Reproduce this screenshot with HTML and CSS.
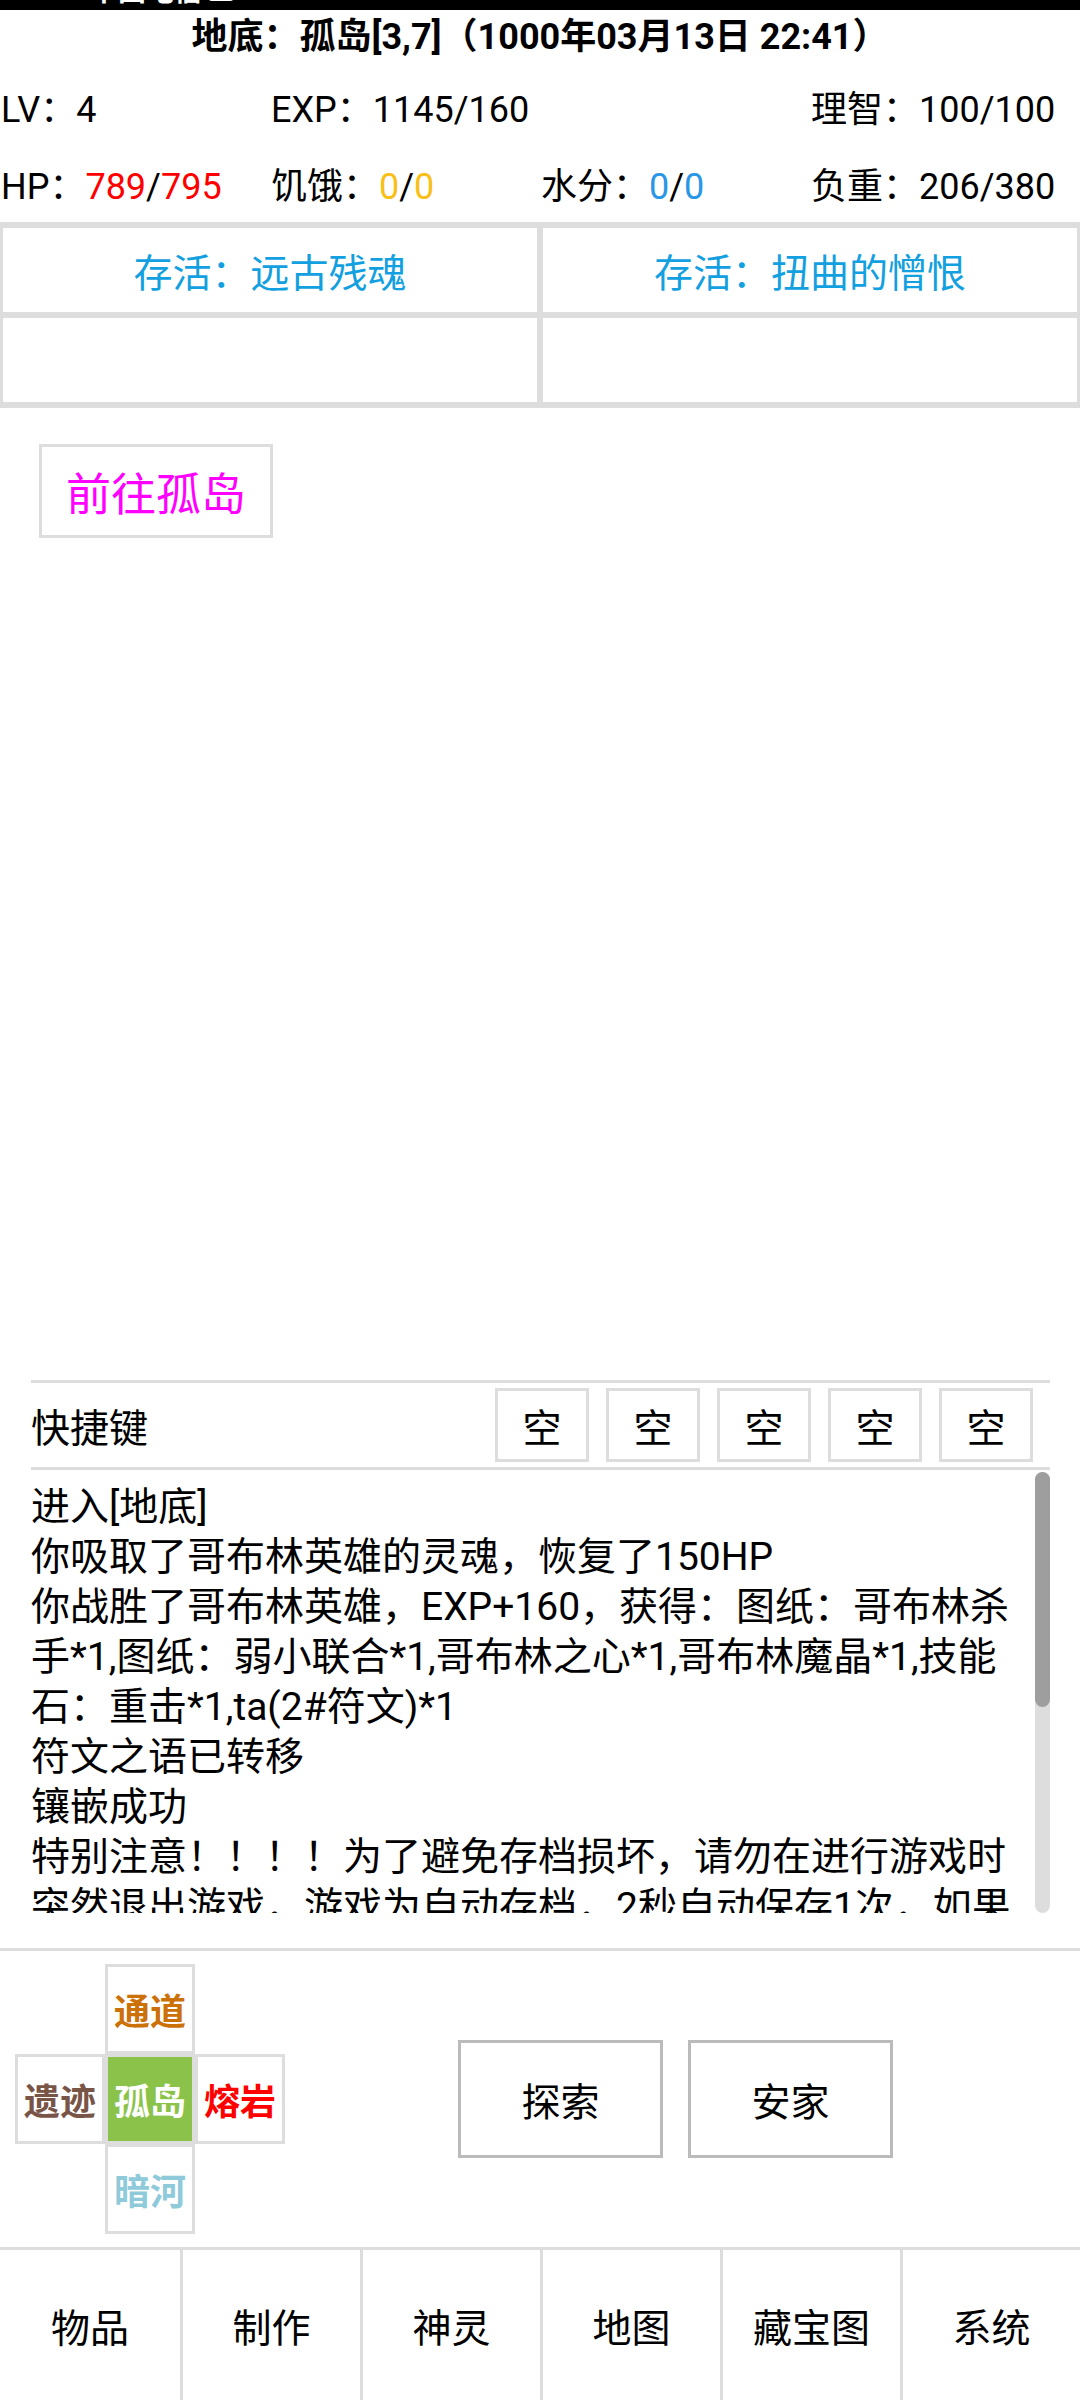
FILE: index.html
```html
<!DOCTYPE html>
<html lang="zh-CN">
<head>
<meta charset="utf-8">
<title>地底</title>
<link rel="stylesheet" href="styles.css">
</head>
<body>
<div class="page">
  <div class="statusbar">
    <div class="statusbar-inner"><span>中国电信</span><span class="sb-icon"></span></div>
  </div>
  <div class="title">地底：孤岛[3,7]（1000年03月13日 22:41）</div>
  <div class="stats">
    <div>LV：4</div>
    <div>EXP：1145/160</div>
    <div></div>
    <div>理智：100/100</div>
    <div>HP：<span class="red">789</span>/<span class="red">795</span></div>
    <div>饥饿：<span class="yellow">0</span>/<span class="yellow">0</span></div>
    <div>水分：<span class="blue">0</span>/<span class="blue">0</span></div>
    <div>负重：206/380</div>
  </div>
  <div class="cells">
    <div class="cell">存活：远古残魂</div>
    <div class="cell">存活：扭曲的憎恨</div>
    <div class="cell"></div>
    <div class="cell"></div>
  </div>
  <div class="goto-wrap">
    <div class="goto">前往孤岛</div>
  </div>
  <div class="spacer"></div>
  <div class="shortcut">
    <div class="sc-label">快捷键</div>
    <div class="sc-keys">
      <div class="sc-key">空</div>
      <div class="sc-key">空</div>
      <div class="sc-key">空</div>
      <div class="sc-key">空</div>
      <div class="sc-key">空</div>
    </div>
  </div>
  <div class="log">
    <div class="log-text">
      <div>进入[地底]</div>
      <div>你吸取了哥布林英雄的灵魂，恢复了150HP</div>
      <div>你战胜了哥布林英雄，EXP+160，获得：图纸：哥布林杀手*1,图纸：弱小联合*1,哥布林之心*1,哥布林魔晶*1,技能石：重击*1,ta(2#符文)*1</div>
      <div>符文之语已转移</div>
      <div>镶嵌成功</div>
      <div>特别注意！！！！为了避免存档损坏，请勿在进行游戏时突然退出游戏，游戏为自动存档，2秒自动保存1次，如果存档损坏，请在系统中读取备份存档。</div>
    </div>
    <div class="scrollbar"><div class="thumb"></div></div>
  </div>
  <div class="sep"></div>
  <div class="action">
    <div class="dpad">
      <div class="dcell d-n">通道</div>
      <div class="dcell d-w">遗迹</div>
      <div class="dcell d-c">孤岛</div>
      <div class="dcell d-e">熔岩</div>
      <div class="dcell d-s">暗河</div>
    </div>
    <div class="actions">
      <div class="abtn">探索</div>
      <div class="abtn">安家</div>
    </div>
  </div>
  <div class="nav">
    <div class="nav-item">物品</div>
    <div class="nav-item">制作</div>
    <div class="nav-item">神灵</div>
    <div class="nav-item">地图</div>
    <div class="nav-item">藏宝图</div>
    <div class="nav-item">系统</div>
  </div>
</div>
</body>
</html>
```

FILE: styles.css
```css
* { box-sizing: border-box; }
html, body { margin: 0; padding: 0; }
body {
  width: 1080px;
  height: 2400px;
  overflow: hidden;
  background: #fff;
  color: #000;
  font-family: Roboto, "Noto Sans CJK SC", sans-serif;
}
.page { display: flex; flex-direction: column; height: 2400px; }

.statusbar { flex: none; height: 10px; background: #000; overflow: hidden; }
.statusbar-inner {
  display: flex; align-items: center; gap: 6px;
  margin-top: -24px; padding-left: 90px;
  height: 32px; color: #fff; font-size: 28px; line-height: 32px; font-weight: bold;
}
.sb-icon { width: 26px; height: 18px; background: #fff; border-radius: 4px; }

.title {
  flex: none; height: 54px; line-height: 54px;
  text-align: center; font-weight: bold; font-size: 36px;
}

.stats {
  flex: none;
  display: grid;
  grid-template-columns: repeat(4, 270px);
  grid-auto-rows: 50px;
  row-gap: 27px;
  padding: 21px 0 0 1px;
  font-size: 36px; line-height: 50px;
  white-space: nowrap;
}
.red { color: #f00; }
.yellow { color: #f9bf16; }
.blue { color: #2a96e8; }

.cells {
  flex: none;
  margin-top: 10px;
  border-top: 3px solid #ddd;
  border-bottom: 3px solid #ddd;
  display: grid;
  grid-template-columns: 1fr 1fr;
}
.cell {
  height: 90px; border: 3px solid #ddd;
  display: flex; align-items: center; justify-content: center;
  font-size: 39px; color: #12a0e0;
}

.goto-wrap { flex: none; padding: 36px 0 0 39px; }
.goto {
  width: 234px; height: 94px; border: 3px solid #ddd;
  display: flex; align-items: center; justify-content: center;
  font-size: 45px; color: #f0f;
}

.spacer { flex: 1; }

.shortcut {
  flex: none;
  margin: 0 30px 0 31px;
  height: 90px;
  border-top: 3px solid #ddd; border-bottom: 3px solid #ddd;
  display: flex; align-items: center;
  padding-right: 17px;
}
.sc-label { flex: 1; font-size: 39px; }
.sc-keys { display: flex; gap: 17px; }
.sc-key {
  width: 94px; height: 74px; border: 3px solid #ddd;
  display: flex; align-items: center; justify-content: center;
  font-size: 39px;
}

.log { flex: none; display: flex; margin: 2px 30px 0 31px; height: 441px; }
.log-text { flex: 1; overflow: hidden; font-size: 39px; line-height: 50px; padding-top: 10px; }
.scrollbar { flex: none; width: 15px; background: #ddd; border-radius: 8px; }
.thumb { height: 235px; background: #9e9e9e; border-radius: 8px; }

.sep { flex: none; margin-top: 35px; height: 3px; background: #ddd; }

.action { flex: none; height: 296px; display: flex; align-items: center; }
.dpad {
  margin-left: 15px;
  display: grid;
  grid-template-columns: repeat(3, 90px);
  grid-template-rows: repeat(3, 90px);
}
.dcell {
  border: 3px solid #ddd;
  display: flex; align-items: center; justify-content: center;
  font-size: 36px; font-weight: bold;
}
.d-n { grid-column: 2; grid-row: 1; color: #cc7008; }
.d-w { grid-column: 1; grid-row: 2; color: #795548; }
.d-c { grid-column: 2; grid-row: 2; color: #fff; background: #8bc34a; }
.d-e { grid-column: 3; grid-row: 2; color: #f00; }
.d-s { grid-column: 2; grid-row: 3; color: #8fcadb; }

.actions { flex: 1; display: flex; justify-content: center; gap: 25px; padding-right: 14px; }
.abtn {
  width: 205px; height: 118px; border: 3px solid #bbb;
  display: flex; align-items: center; justify-content: center;
  font-size: 39px;
}

.nav {
  flex: none; height: 153px;
  border-top: 3px solid #ddd;
  display: grid; grid-template-columns: repeat(6, 1fr);
}
.nav-item {
  display: flex; align-items: center; justify-content: center;
  font-size: 39px; border-left: 3px solid #ddd;
}
.nav-item:first-child { border-left: none; }
```
